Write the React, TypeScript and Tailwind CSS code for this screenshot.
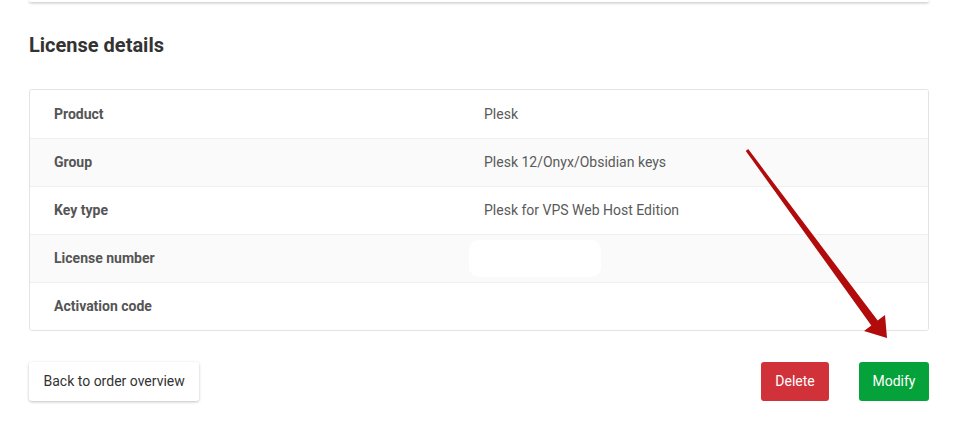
const rows = [
  { label: 'Product', value: 'Plesk' },
  { label: 'Group', value: 'Plesk 12/Onyx/Obsidian keys' },
  { label: 'Key type', value: 'Plesk for VPS Web Host Edition' },
  { label: 'License number', value: '', hidden: true },
  { label: 'Activation code', value: '' },
];

const Arrow = () => (
  <svg className="pointer-events-none absolute left-0 top-0" width="956" height="432" viewBox="0 0 956 432">
    <polygon
      points="745.8,150.9 871.3,325.4 864,331 887,338 885,315 877.7,320.6 748.2,149.1"
      fill="#b10b0b"
    />
  </svg>
);

export default function App() {
  return (
    <div className="relative h-[432px] w-[956px] overflow-hidden bg-white font-['Roboto',sans-serif]">
      <div className="pl-[29px] pr-[27px]">
        <div className="h-[2px] w-full rounded-b bg-white shadow-[0_1px_3px_rgba(0,0,0,0.3)]" />

        <h2 className="mt-[31px] text-[20px] font-bold leading-[24px] text-[#333]">License details</h2>

        <div className="mt-[32px] overflow-hidden rounded-[3px] border border-[#e3e3e3]">
          {rows.map((row, i) => (
            <div
              key={row.label}
              className={`flex h-[48px] items-center px-6 text-[14px] text-[#555] ${
                i % 2 === 1 ? 'bg-[#fafafa]' : 'bg-white'
              } ${i > 0 ? 'border-t border-[#f0f0f0]' : ''}`}
            >
              <div className="w-[430px] font-bold">{row.label}</div>
              <div className="flex-1 text-[#5a5a5a]">
                {row.hidden ? (
                  <div className="-ml-[15px] h-[37px] w-[132px] rounded-[10px] bg-white" />
                ) : (
                  row.value
                )}
              </div>
            </div>
          ))}
        </div>

        <div className="mt-[31px] flex items-center">
          <button className="h-[39px] rounded-[3px] bg-white px-[14.5px] text-[14px] text-[#333] shadow-[0_1px_3px_rgba(0,0,0,0.25)]">
            Back to order overview
          </button>
          <div className="ml-auto flex gap-[30px]">
            <button className="h-[39px] w-[68px] rounded-[3px] bg-[#d13239] text-[14px] text-white">Delete</button>
            <button className="h-[39px] w-[70px] rounded-[3px] bg-[#05a13a] text-[14px] text-white">Modify</button>
          </div>
        </div>
      </div>
      <Arrow />
    </div>
  );
}
